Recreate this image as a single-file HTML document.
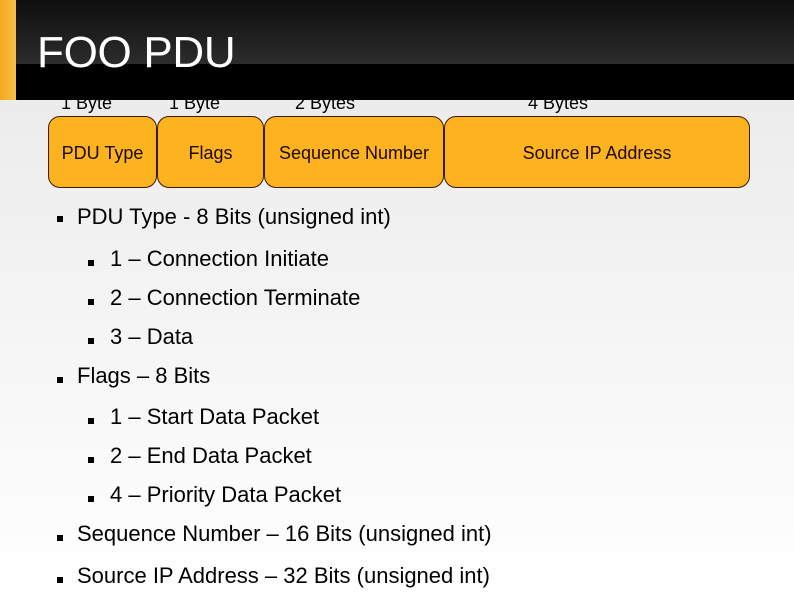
<!DOCTYPE html>
<html><head><style>
body{margin:0;width:794px;height:595px;overflow:hidden;position:relative;font-family:"Liberation Sans",sans-serif;background:linear-gradient(#e8e8e8,#f6f6f6 60%,#fff)}
#hdr{position:absolute;left:16px;top:0;width:778px;height:100px;background:#000}
#hdr .g{position:absolute;left:0;top:0;right:0;height:64px;background:linear-gradient(#0e0e0e,#2c2c2c)}
#strip{position:absolute;left:0;top:0;width:16px;height:100px;background:linear-gradient(90deg,#f3a821,#f8c04a)}
h1{position:absolute;left:37px;top:28px;margin:0;font-size:44px;font-weight:normal;color:#fff;letter-spacing:-0.3px}
.lb{position:absolute;top:93px;font-size:18px;color:#000;clip-path:inset(7px 0 0 0)}
.bx{position:absolute;top:116px;height:72px;background:#fdb21f;border:1px solid #3a1a00;border-radius:12px;box-sizing:border-box;font-size:18px;color:#1a0a00;display:flex;align-items:center;justify-content:center;padding-top:2px}
.t{position:absolute;font-size:22px;color:#000;white-space:nowrap}
.s{position:absolute;width:6px;height:6px;background:#000}
</style></head><body>
<div id="strip"></div>
<div id="hdr"><div class="g"></div></div>
<h1>FOO PDU</h1>
<div class="lb" style="left:61px">1 Byte</div>
<div class="lb" style="left:169px">1 Byte</div>
<div class="lb" style="left:295px">2 Bytes</div>
<div class="lb" style="left:528px">4 Bytes</div>
<div class="bx" style="left:48px;width:109px">PDU Type</div>
<div class="bx" style="left:157px;width:107px">Flags</div>
<div class="bx" style="left:264px;width:180px">Sequence Number</div>
<div class="bx" style="left:444px;width:306px">Source IP Address</div>

<div class="s" style="left:57px;top:216px"></div><div class="t" style="left:77px;top:204px">PDU Type - 8 Bits (unsigned int)</div>
<div class="s" style="left:88px;top:260px"></div><div class="t" style="left:110px;top:246px">1 – Connection Initiate</div>
<div class="s" style="left:88px;top:299px"></div><div class="t" style="left:110px;top:285px">2 – Connection Terminate</div>
<div class="s" style="left:88px;top:338px"></div><div class="t" style="left:110px;top:324px">3 – Data</div>
<div class="s" style="left:57px;top:377px"></div><div class="t" style="left:77px;top:363px">Flags – 8 Bits</div>
<div class="s" style="left:88px;top:418px"></div><div class="t" style="left:110px;top:404px">1 – Start Data Packet</div>
<div class="s" style="left:88px;top:457px"></div><div class="t" style="left:110px;top:443px">2 – End Data Packet</div>
<div class="s" style="left:88px;top:496px"></div><div class="t" style="left:110px;top:482px">4 – Priority Data Packet</div>
<div class="s" style="left:57px;top:535px"></div><div class="t" style="left:77px;top:521px">Sequence Number – 16 Bits (unsigned int)</div>
<div class="s" style="left:57px;top:577px"></div><div class="t" style="left:77px;top:563px">Source IP Address – 32 Bits (unsigned int)</div>
</body></html>
